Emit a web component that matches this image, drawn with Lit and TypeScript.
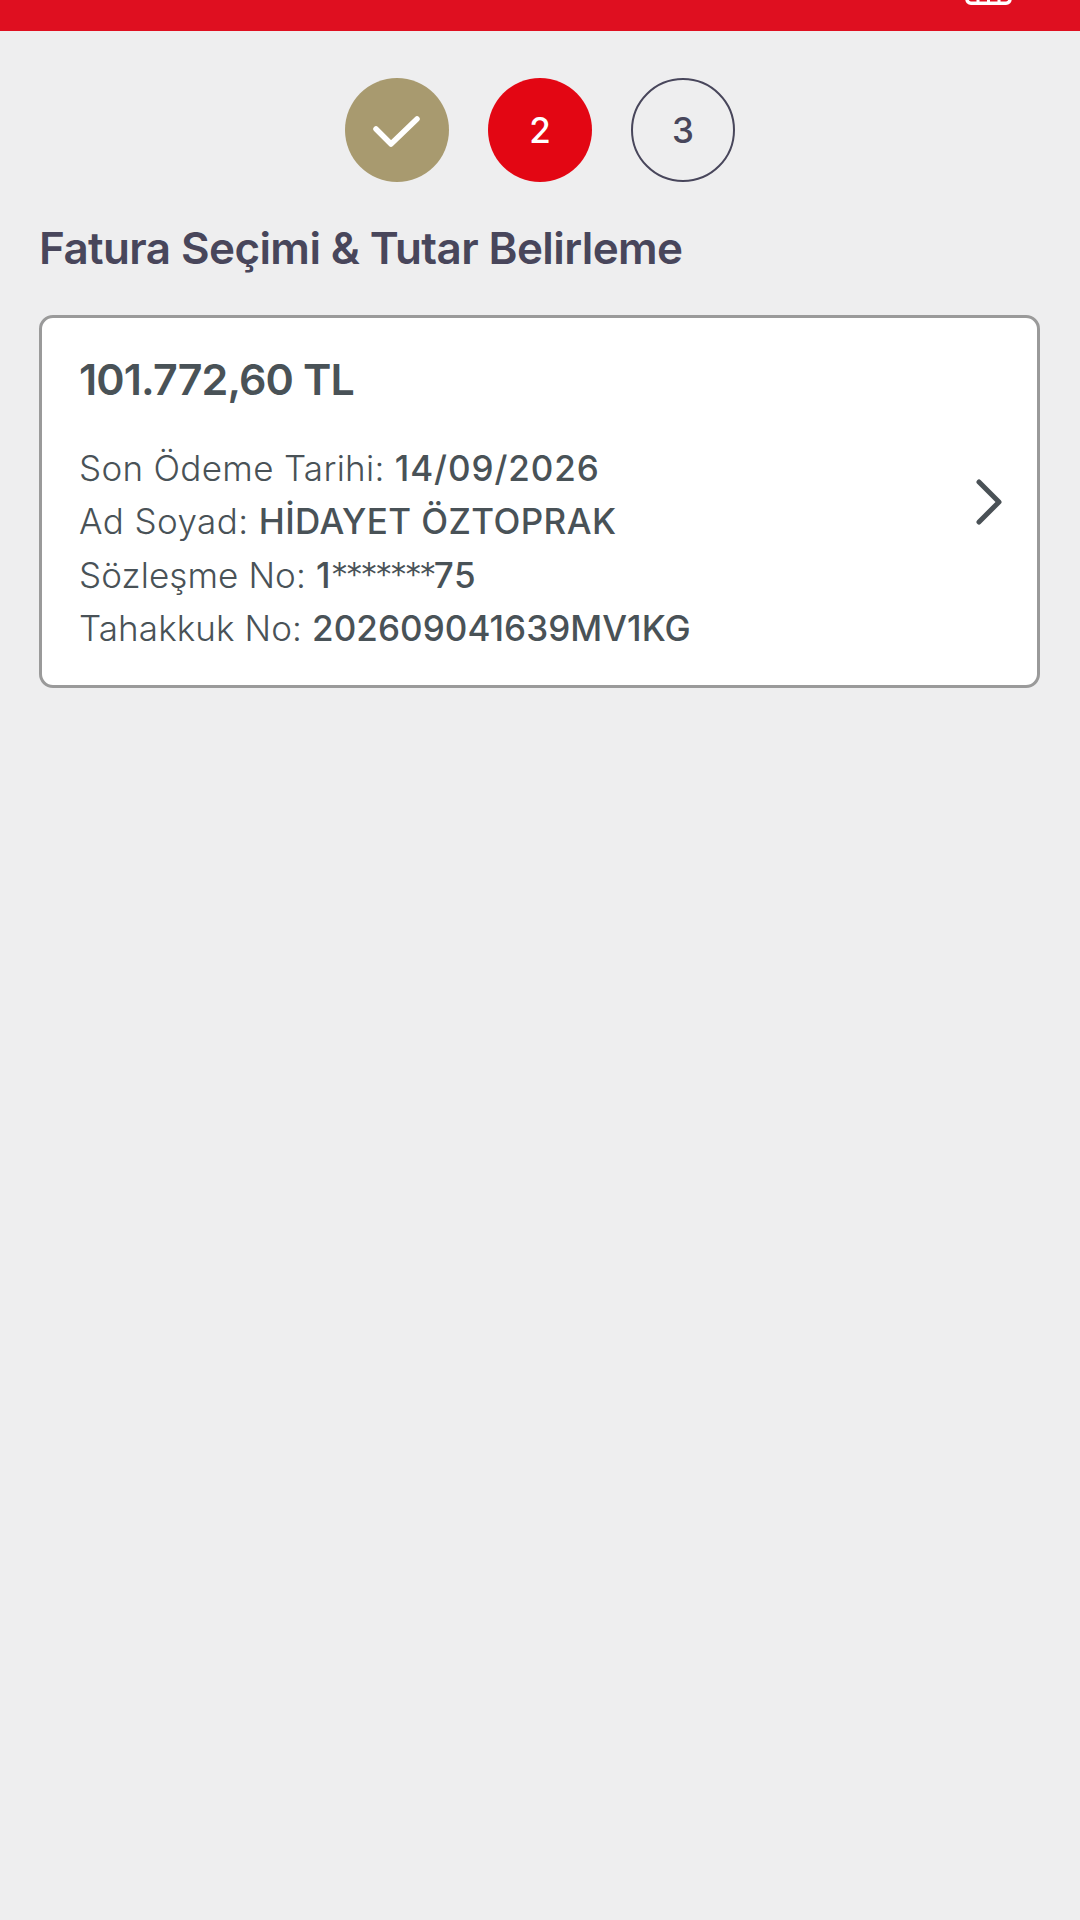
import { LitElement, html, css } from "lit";
import { customElement } from "lit/decorators.js";

@customElement("app-root")
export class AppRoot extends LitElement {
  static styles = css`
    :host { display: block; width: 1080px; height: 1920px; background: #eeeeef; font-family: Inter, "Open Sans", sans-serif; overflow: hidden; }
    .bar { height: 31px; background: #df0f20; display: flex; justify-content: flex-end; align-items: flex-end; padding-right: 68px; padding-bottom: 26px; box-sizing: border-box; }
    .bar svg { display: block; width: 47px; height: 12px; flex: none; }
    .steps { display: flex; justify-content: center; gap: 39px; margin-top: 47px; }
    .step { width: 104px; height: 104px; box-sizing: border-box; border-radius: 50%; display: flex; align-items: center; justify-content: center; font-size: 35px; font-weight: 500; }
    .done { background: #a89a6f; }
    .active { background: #e30613; color: #fff; }
    .todo { border: 2.5px solid #48465b; color: #48465b; }
    h1 { margin: 36px 0 0 39px; font-size: 44px; line-height: 60px; font-weight: 600; color: #48465b; letter-spacing: -0.6px; white-space: nowrap; }
    .card { margin: 37px 40px 0 39px; height: 373px; box-sizing: border-box; background: #fff; border: 3px solid #9a9a9a; border-radius: 14px; padding: 31px 33px 0 37px; display: flex; align-items: center; justify-content: space-between; color: #495257; }
    .info { align-self: flex-start; }
    .amount { font-size: 43px; line-height: 60px; font-weight: 600; letter-spacing: -0.9px; margin-bottom: 33px; }
    .row { font-size: 35px; line-height: 53.4px; font-weight: 300; letter-spacing: 0.1px; white-space: nowrap; }
    .row b { font-weight: 500; letter-spacing: 0.4px; }
    .row.date { letter-spacing: 0.3px; }
    .row.date b { letter-spacing: 0.9px; }
    .row.name { letter-spacing: 0.4px; }
    .row.ref b { letter-spacing: 0.05px; }
    .mask { font-weight: 300; letter-spacing: -2.8px; }
    .chev { width: 32px; height: 50px; margin-top: -31px; display: block; flex: none; }
  `;

  render() {
    return html`
      <div class="bar">
        <svg viewBox="0 0 47 12" fill="none" stroke="#fff" stroke-width="3.5">
          <path d="M2 -4V6a4 4 0 0 0 4 4.2H41a4 4 0 0 0 4-4.2V-4" />
          <path d="M13 0V9M23.5 0V9M34 0V9" stroke-width="3" />
        </svg>
      </div>
      <div class="steps">
        <div class="step done">
          <svg width="56" height="42" viewBox="0 0 56 42" fill="none" stroke="#fff" stroke-width="5.5" stroke-linecap="round" stroke-linejoin="round">
            <path d="M7 20L22 35L48 10" />
          </svg>
        </div>
        <div class="step active">2</div>
        <div class="step todo">3</div>
      </div>
      <h1>Fatura Seçimi &amp; Tutar Belirleme</h1>
      <div class="card">
        <div class="info">
          <div class="amount">101.772,60 TL</div>
          <div class="row date">Son Ödeme Tarihi: <b>14/09/2026</b></div>
          <div class="row name">Ad Soyad: <b>HİDAYET ÖZTOPRAK</b></div>
          <div class="row">Sözleşme No: <b>1<span class="mask">*******</span>75</b></div>
          <div class="row ref">Tahakkuk No: <b>202609041639MV1KG</b></div>
        </div>
        <svg class="chev" viewBox="0 0 32 50" fill="none" stroke="#4a5156" stroke-width="5" stroke-linecap="round" stroke-linejoin="round">
          <path d="M7 5L27 25L7 45" />
        </svg>
      </div>
    `;
  }
}
